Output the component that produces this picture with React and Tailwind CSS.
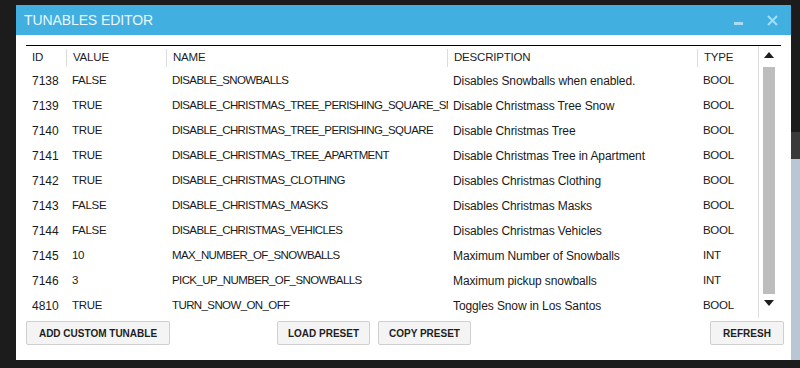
import React from 'react';

const rows = [
  ['7138', 'FALSE', 'DISABLE_SNOWBALLS', 'Disables Snowballs when enabled.', 'BOOL'],
  ['7139', 'TRUE', 'DISABLE_CHRISTMAS_TREE_PERISHING_SQUARE_SNOW', 'Disable Christmass Tree Snow', 'BOOL'],
  ['7140', 'TRUE', 'DISABLE_CHRISTMAS_TREE_PERISHING_SQUARE', 'Disable Christmas Tree', 'BOOL'],
  ['7141', 'TRUE', 'DISABLE_CHRISTMAS_TREE_APARTMENT', 'Disable Christmas Tree in Apartment', 'BOOL'],
  ['7142', 'TRUE', 'DISABLE_CHRISTMAS_CLOTHING', 'Disables Christmas Clothing', 'BOOL'],
  ['7143', 'FALSE', 'DISABLE_CHRISTMAS_MASKS', 'Disables Christmas Masks', 'BOOL'],
  ['7144', 'FALSE', 'DISABLE_CHRISTMAS_VEHICLES', 'Disables Christmas Vehicles', 'BOOL'],
  ['7145', '10', 'MAX_NUMBER_OF_SNOWBALLS', 'Maximum Number of Snowballs', 'INT'],
  ['7146', '3', 'PICK_UP_NUMBER_OF_SNOWBALLS', 'Maximum pickup snowballs', 'INT'],
  ['4810', 'TRUE', 'TURN_SNOW_ON_OFF', 'Toggles Snow in Los Santos', 'BOOL'],
];

const cols = ['w-[41px]', 'w-[100px]', 'w-[281px]', 'w-[250px]', 'w-[60px]'];
// description column is mixed case; the others are caps and set a little tighter
const textCls = [
  'text-[12px]',
  'text-[11.5px] tracking-[-0.3px]',
  'text-[11.5px] tracking-[-0.6px]',
  'text-[12px] tracking-[-0.1px]',
  'text-[11.5px] tracking-[-0.3px]',
];

function Button({ children, className = '' }) {
  return (
    <button
      className={`h-[24px] rounded-[2px] border border-[#cfcfcf] bg-[#f4f4f4] text-[10px] font-bold text-[#1e1e1e] ${className}`}
    >
      {children}
    </button>
  );
}

export default function App() {
  return (
    <div
      className="flex h-[368px] w-[800px] overflow-hidden bg-[#1c1c1c]"
      style={{ fontFamily: '"Liberation Sans", Arial, sans-serif' }}
    >
      <div className="ml-[16px] mt-[5px] flex h-[355px] w-[775px] flex-col bg-white">
        {/* title bar */}
        <div className="flex h-[30px] items-center bg-[#41b0e0] pl-[8px] pr-[13px]">
          <span className="text-[14px] tracking-[-0.1px] text-[#eaf6fc]">TUNABLES EDITOR</span>
          <div className="ml-auto flex items-center gap-[24px]">
            <div className="mt-[7px] h-[3px] w-[9px] bg-[#a9dcf3]" />
            <svg width="11" height="11" viewBox="0 0 11 11">
              <path d="M1 1L10 10M10 1L1 10" stroke="#a9dcf3" strokeWidth="2" />
            </svg>
          </div>
        </div>

        <div className="flex flex-col px-[10px] pt-[10px]">
          <div className="flex border-t border-black">
            <div className="flex w-[732px] flex-col">
              {/* header */}
              <div className="flex h-[22px] items-center pt-[1px] text-[#1e1e1e]">
                {['ID', 'VALUE', 'NAME', 'DESCRIPTION', 'TYPE'].map((h, i) => (
                  <div
                    key={h}
                    className={`${cols[i]} flex h-[18px] items-center text-[11.5px] tracking-[-0.2px] ${i < 4 ? 'border-r border-[#dcdcdc]' : ''} pl-[6px]`}
                  >
                    {h}
                  </div>
                ))}
              </div>
              {rows.map((r) => (
                <div key={r[0]} className="flex h-[25px] items-center pt-[1px] text-[#1a1a1a]">
                  {r.map((c, i) => (
                    <div
                      key={i}
                      className={`${cols[i]} ${textCls[i]} overflow-hidden whitespace-nowrap ${i === 0 ? 'pl-[6px]' : 'pl-[5px]'}`}
                    >
                      {c}
                    </div>
                  ))}
                </div>
              ))}
            </div>
            {/* scrollbar */}
            <div className="flex w-[17px] flex-col items-center border-l border-[#dcdcdc] pl-[3px]">
              <div className="mt-[6px] h-[8px]">
                <svg width="10" height="6" viewBox="0 0 10 6">
                  <path d="M5 0L10 6H0Z" fill="#1e1e1e" />
                </svg>
              </div>
              <div className="mt-[7px] h-[227px] w-[12px] bg-[#bdbdbd]" />
              <div className="mt-[6px]">
                <svg width="10" height="6" viewBox="0 0 10 6">
                  <path d="M0 0H10L5 6Z" fill="#1e1e1e" />
                </svg>
              </div>
            </div>
          </div>

          <div className="mt-[3px] flex items-center">
            <Button className="w-[144px]">ADD CUSTOM TUNABLE</Button>
            <Button className="ml-[107px] w-[93px]">LOAD PRESET</Button>
            <Button className="ml-[8px] w-[93px]">COPY PRESET</Button>
            <Button className="ml-auto mr-[-3px] w-[74px]">REFRESH</Button>
          </div>
        </div>
      </div>

      {/* background sliver */}
      <div className="flex w-[9px] flex-col">
        <div className="h-[132px]" />
        <div className="h-[27px] bg-[#3a3a3a]" />
        <div className="h-[201px] bg-[#b9c6d3]" />
      </div>
    </div>
  );
}
